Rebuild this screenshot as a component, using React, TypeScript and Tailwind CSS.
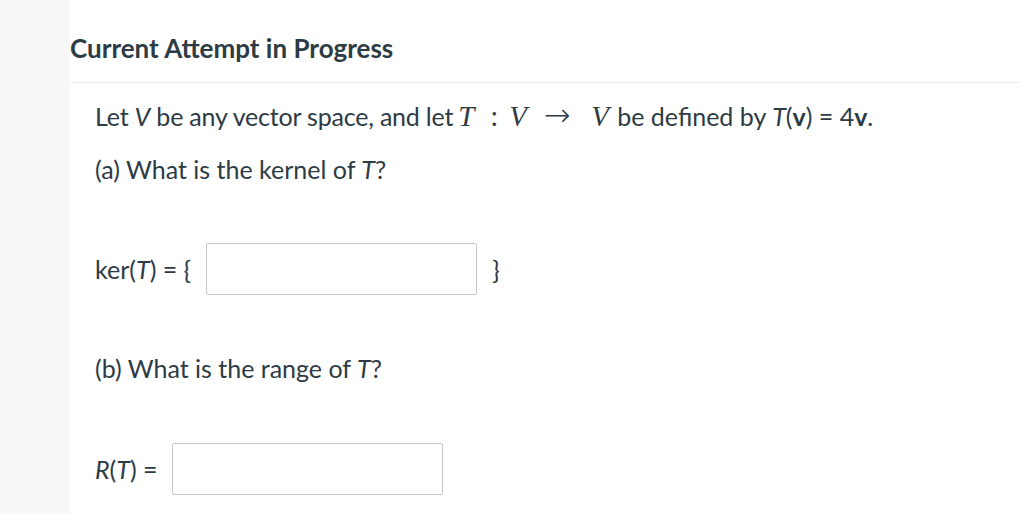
export default function App() {
  const mathItalic = "inline-block font-['Liberation_Serif',serif] italic text-[29px]"
  return (
    <div className="flex h-[514px] w-[1020px] overflow-hidden font-['Lato',sans-serif] text-[#2d3b45]">
      <div className="w-[70px] shrink-0 bg-[#f8f8f8]" />
      <div className="flex-1 bg-white">
        <div className="h-[83px] border-b border-[#ebebeb] pt-[35px]">
          <h2 className="text-[26px] font-bold leading-none">Current Attempt in Progress</h2>
        </div>
        <div className="pl-[25px] text-[25px] leading-none">
          {/* math bits sized to match the MathJax render */}
          <p className="mt-[16px] flex h-[26px] items-baseline whitespace-pre">
            <span className="tracking-[-0.2px]">
              Let <i>V</i> be any vector space, and let
            </span>
            <span className={mathItalic + " w-[26px] text-center"}>T</span>
            <span className="inline-block w-[30px] text-center font-['Liberation_Serif',serif] text-[29px]">:</span>
            <span className={mathItalic + " w-[17px]"}>V</span>
            <span className="inline-block w-[54px] pl-[8px] text-center font-['DejaVu_Sans_ExtraLight','DejaVu_Sans',sans-serif] text-[32px] font-light">
              →
            </span>
            <span className={mathItalic + " ml-[11px] w-[16px]"}>V</span>
            <span className="ml-[10px]">
              be defined by <i>T</i>(<b>v</b>) = 4<b>v</b>.
            </span>
          </p>
          <p className="mt-[32px] h-[26px]">
            (a) What is the kernel of <i>T</i>?
          </p>
          <div className="mt-[60px] flex h-[52px] items-center">
            <span>
              ker(<i>T</i>) = {"{"}
            </span>
            <input className="ml-[15px] h-[52px] w-[271px] rounded-[2px] border border-[#c7c7c7] bg-white" />
            <span className="ml-[15px]">{"}"}</span>
          </div>
          <p className="mt-[61px] h-[26px]">
            (b) What is the range of <i>T</i>?
          </p>
          <div className="mt-[61px] flex h-[52px] items-center">
            <span>
              <i>R</i>(<i>T</i>) =
            </span>
            <input className="ml-[14px] h-[52px] w-[271px] rounded-[2px] border border-[#c7c7c7] bg-white" />
          </div>
        </div>
      </div>
    </div>
  )
}
